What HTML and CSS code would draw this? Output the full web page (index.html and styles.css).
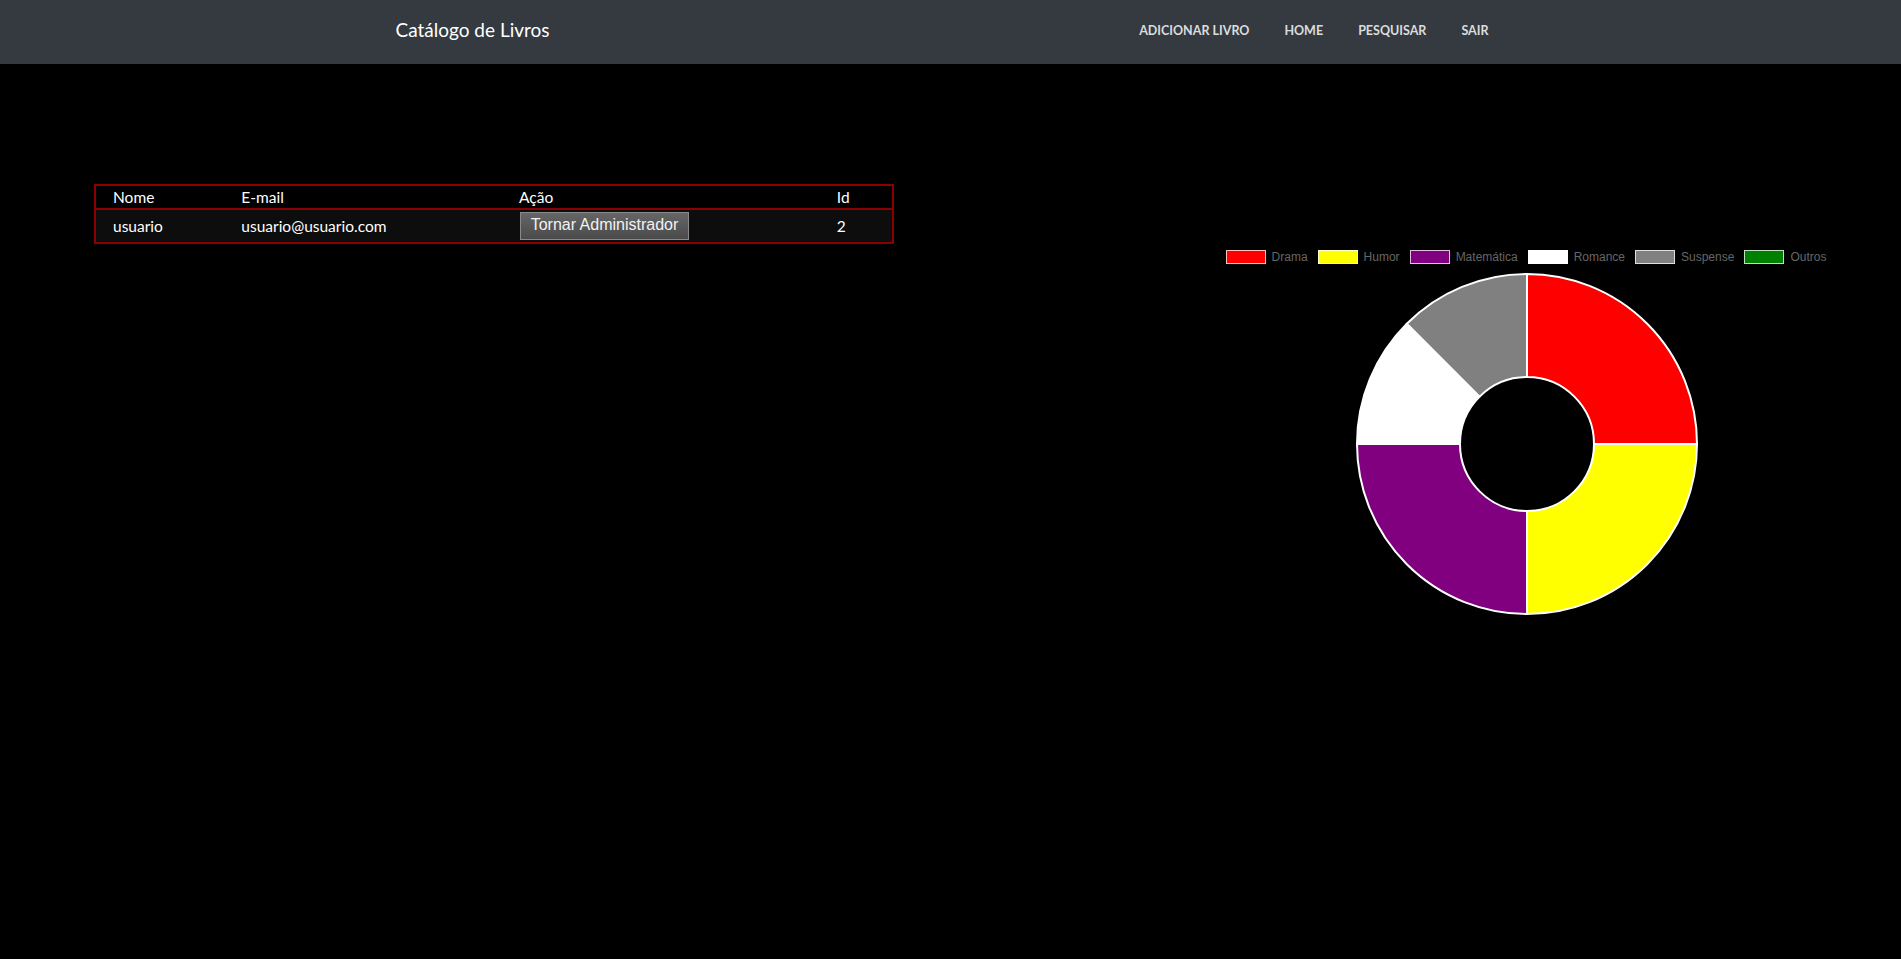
FILE: index.html
```html
<!DOCTYPE html>
<html lang="pt-BR">
<head>
<meta charset="utf-8">
<title>Catálogo de Livros</title>
<link rel="stylesheet" href="styles.css">
</head>
<body>
<nav class="navbar">
  <div class="nav-container">
    <a class="brand" href="#">Catálogo de Livros</a>
    <ul class="nav-links">
      <li><a href="#">Adicionar Livro</a></li>
      <li><a href="#">Home</a></li>
      <li><a href="#">Pesquisar</a></li>
      <li><a href="#">Sair</a></li>
    </ul>
  </div>
</nav>
<main class="content">
  <section class="users">
    <table class="user-table">
      <colgroup>
        <col class="c-nome"><col class="c-email"><col class="c-acao"><col class="c-id">
      </colgroup>
      <thead>
        <tr><th>Nome</th><th>E-mail</th><th>Ação</th><th>Id</th></tr>
      </thead>
      <tbody>
        <tr>
          <td>usuario</td>
          <td>usuario@usuario.com</td>
          <td><button class="btn-admin">Tornar Administrador</button></td>
          <td>2</td>
        </tr>
      </tbody>
    </table>
  </section>
  <section class="chart">
    <ul class="legend">
      <li><span class="swatch sw-drama"></span>Drama</li>
      <li><span class="swatch sw-humor"></span>Humor</li>
      <li><span class="swatch sw-mat"></span>Matemática</li>
      <li><span class="swatch sw-rom"></span>Romance</li>
      <li><span class="swatch sw-sus"></span>Suspense</li>
      <li><span class="swatch sw-out"></span>Outros</li>
    </ul>
    <svg class="donut" width="344" height="344" viewBox="0 0 344 344">
      <g stroke="#fff" stroke-width="2" stroke-linejoin="round">
        <path fill="#ff0000" d="M172,2 A170,170 0 0 1 342,172 L239,172 A67,67 0 0 0 172,105 Z"/>
        <path fill="#ffff00" d="M342,172 A170,170 0 0 1 172,342 L172,239 A67,67 0 0 0 239,172 Z"/>
        <path fill="#800080" d="M172,342 A170,170 0 0 1 2,172 L105,172 A67,67 0 0 0 172,239 Z"/>
        <path fill="#ffffff" d="M2,172 A170,170 0 0 1 51.79,51.79 L124.62,124.62 A67,67 0 0 0 105,172 Z"/>
        <path fill="#808080" d="M51.79,51.79 A170,170 0 0 1 172,2 L172,105 A67,67 0 0 0 124.62,124.62 Z"/>
      </g>
    </svg>
  </section>
</main>
</body>
</html>
```
FILE: styles.css
```css
html, body {
  margin: 0;
  padding: 0;
}
body {
  background: #000;
  color: #fff;
  font-family: Lato, "Open Sans", sans-serif;
  min-height: 959px;
}
.navbar {
  background: #343a40;
  height: 64px;
}
.nav-container {
  width: 1140px;
  margin: 0 auto;
  padding: 0 15px;
  box-sizing: border-box;
  height: 100%;
  display: flex;
  align-items: center;
  justify-content: space-between;
}
.brand {
  color: #fff;
  text-decoration: none;
  font-size: 19px;
  padding-bottom: 5px;
}
.nav-links {
  list-style: none;
  margin: 0;
  padding: 0 17px 7px 0;
  display: flex;
  gap: 35px;
}
.nav-links a {
  color: #dcdcdc;
  text-decoration: none;
  text-transform: uppercase;
  font-weight: 700;
  font-size: 12.5px;
}
.content {
  display: flex;
}
.users {
  padding: 120px 0 0 94px;
}
.user-table {
  width: 800px;
  table-layout: fixed;
  border-collapse: collapse;
  border: 2px solid #8b0000;
  font-size: 15.5px;
}
.c-nome { width: 129px; }
.c-email { width: 277px; }
.c-acao { width: 317px; }
.c-id { width: 73px; }
.user-table th {
  font-weight: 400;
  text-align: left;
  height: 22px;
  padding: 0 0 0 17px;
  border-bottom: 2px solid #8b0000;
}
.user-table td {
  background: #0d0d0d;
  height: 32px;
  padding: 0 0 0 17px;
}
.btn-admin {
  font-family: "Liberation Sans", Arial, sans-serif;
  font-size: 16px;
  line-height: 24px;
  color: #f2f2f2;
  background: linear-gradient(#666, #4a4a4a);
  border: 1px solid #8a8a8a;
  padding: 0 0 2px;
  height: 28px;
  width: 169px;
  margin: 0 0 0 1px;
  display: block;
}
.chart {
  margin-left: auto;
  width: 750px;
  padding-top: 186px;
  display: flex;
  flex-direction: column;
  align-items: center;
}
.legend {
  list-style: none;
  margin: 0;
  padding: 0;
  display: flex;
  gap: 10px;
  font-family: "Liberation Sans", Arial, sans-serif;
  font-size: 12px;
  color: #666;
  line-height: 14px;
}
.legend li {
  display: flex;
  align-items: center;
  gap: 6px;
}
.swatch {
  width: 38px;
  height: 12px;
  border: 1px solid rgba(255, 255, 255, 0.75);
}
.sw-drama { background: #ff0000; }
.sw-humor { background: #ffff00; }
.sw-mat { background: #800080; }
.sw-rom { background: #ffffff; }
.sw-sus { background: #808080; }
.sw-out { background: #008000; }
.donut {
  display: block;
  margin: 8px 0 0 2px;
}
```
